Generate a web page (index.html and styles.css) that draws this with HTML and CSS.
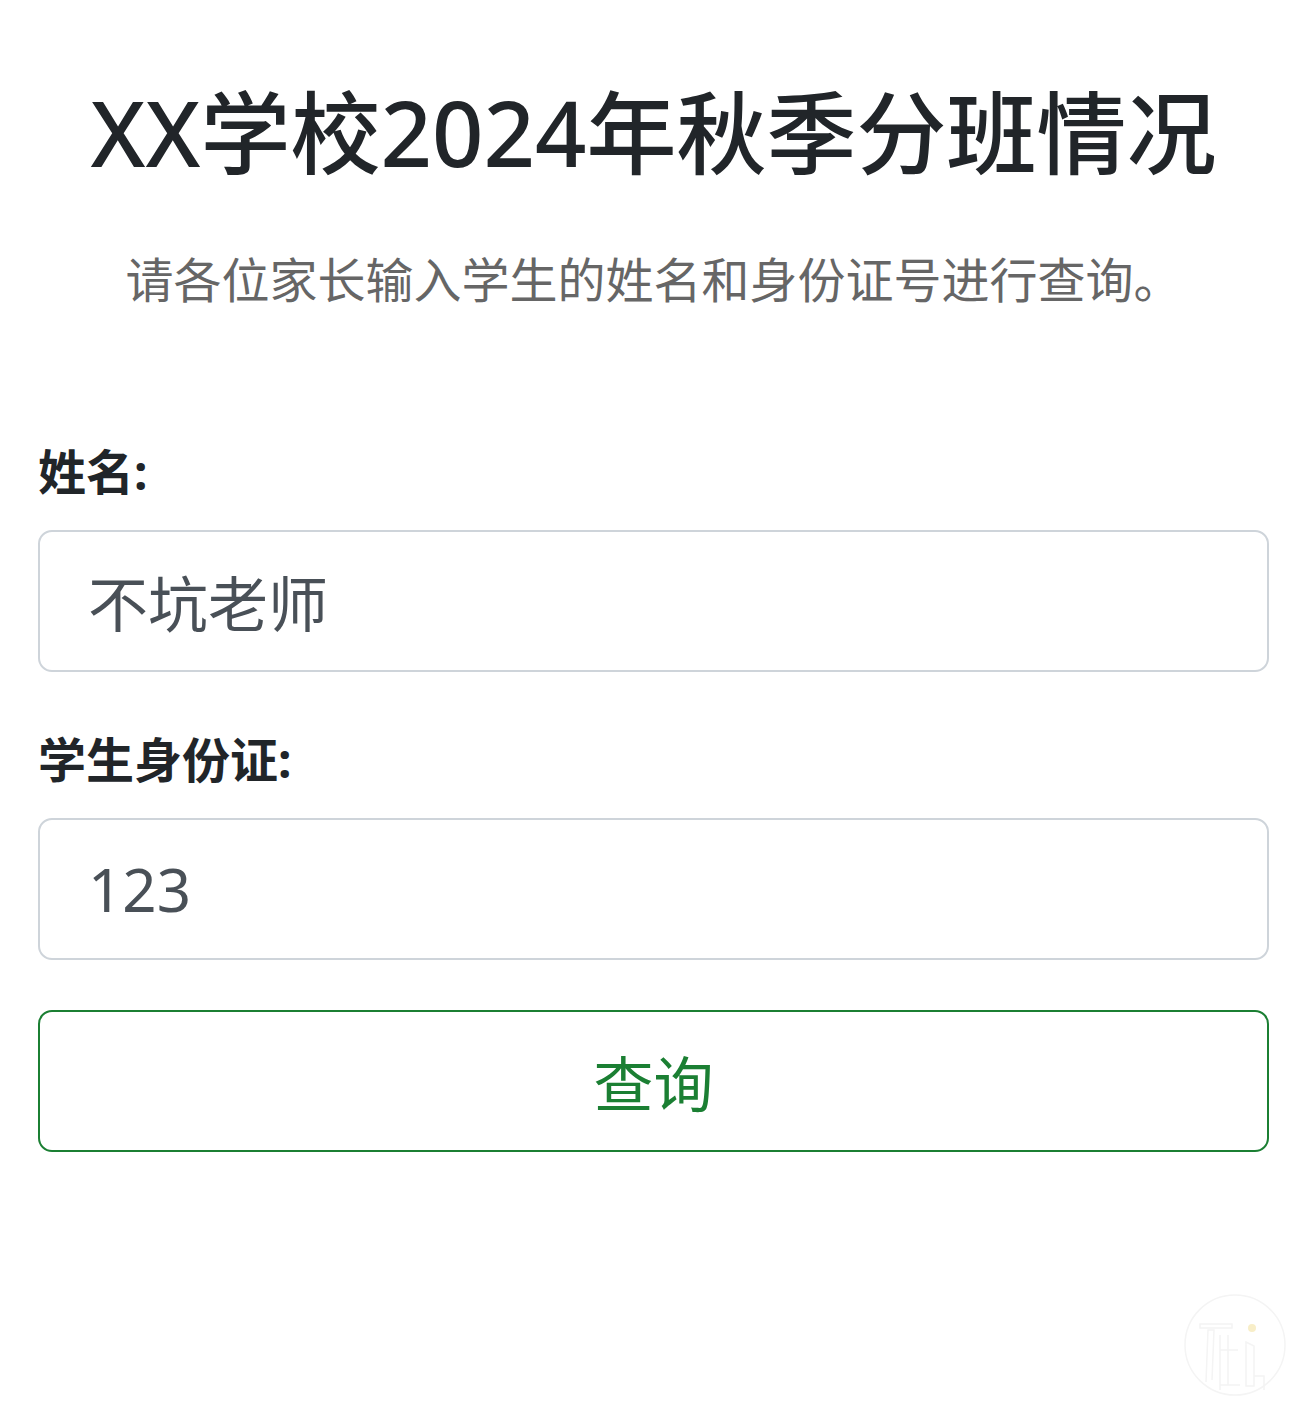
FILE: index.html
```html
<!DOCTYPE html>
<html lang="zh-CN">
<head>
<meta charset="utf-8">
<title>XX学校2024年秋季分班情况</title>
<link rel="stylesheet" href="styles.css">
</head>
<body>
<main class="page">
  <h1 class="title">XX学校2024年秋季分班情况</h1>
  <p class="lead">请各位家长输入学生的姓名和身份证号进行查询。</p>
  <form class="form">
    <div class="field">
      <label class="label" for="name">姓名:</label>
      <input class="input" id="name" type="text" value="不坑老师">
    </div>
    <div class="field">
      <label class="label" for="idcard">学生身份证:</label>
      <input class="input" id="idcard" type="text" value="123">
    </div>
    <button class="btn" type="button">查询</button>
  </form>
</main>
<div class="watermark">
  <svg width="110" height="110" viewBox="0 0 110 110">
    <circle cx="55" cy="55" r="50" fill="none" stroke="#f4f4f4" stroke-width="1.5"/>
    <path d="M26 92 L28 40 L34 40 L32 90 M20 34 L52 34 L52 38 L20 38 Z" fill="none" stroke="#f4f4f4" stroke-width="1.5"/>
    <path d="M40 45 L40 100 M40 60 L58 60 M48 45 L48 95 M40 95 L60 95" fill="none" stroke="#f4f4f4" stroke-width="1.5"/>
    <path d="M66 52 L66 96 L74 96 L74 56 Z M74 86 L84 86 L84 100" fill="none" stroke="#f4f4f4" stroke-width="1.5"/>
    <circle cx="72" cy="38" r="4" fill="#f8eec8"/>
  </svg>
</div>
</body>
</html>
```
FILE: styles.css
```css
* { box-sizing: border-box; }
html, body { margin: 0; padding: 0; background: #fff; }
body {
  font-family: "Noto Sans", "Noto Sans CJK SC", sans-serif;
  color: #212529;
  width: 1304px;
  min-height: 1410px;
  position: relative;
  overflow: hidden;
}
.page {
  padding: 78px 35px 0 38px;
  display: flex;
  flex-direction: column;
}
.title {
  margin: 0;
  font-size: 90px;
  font-weight: 500;
  line-height: 108px;
  text-align: center;
}
.lead {
  margin: 58px 0 0;
  font-size: 48px;
  line-height: 72px;
  color: #666;
  text-align: center;
}
.form {
  margin-top: 120px;
  display: flex;
  flex-direction: column;
}
.field {
  display: flex;
  flex-direction: column;
  margin-bottom: 46px;
}
.field + .field { margin-top: 6px; }
.label {
  font-size: 48px;
  font-weight: 700;
  line-height: 72px;
  margin-bottom: 22px;
}
.input {
  height: 142px;
  width: 100%;
  border: 2px solid #ced4da;
  border-radius: 14px;
  padding: 0 48px;
  font-family: "Noto Sans", "Noto Sans CJK SC", sans-serif;
  font-size: 60px;
  color: #495057;
  background: #fff;
  outline: none;
}
.btn {
  height: 142px;
  width: 100%;
  margin-top: 4px;
  border: 2.5px solid #1b7f33;
  border-radius: 14px;
  background: #fff;
  color: #1b7f33;
  font-family: "Noto Sans", "Noto Sans CJK SC", sans-serif;
  font-size: 60px;
  line-height: 1;
  padding-top: 6px;
}
.watermark {
  position: absolute;
  left: 1180px;
  top: 1290px;
}
```
